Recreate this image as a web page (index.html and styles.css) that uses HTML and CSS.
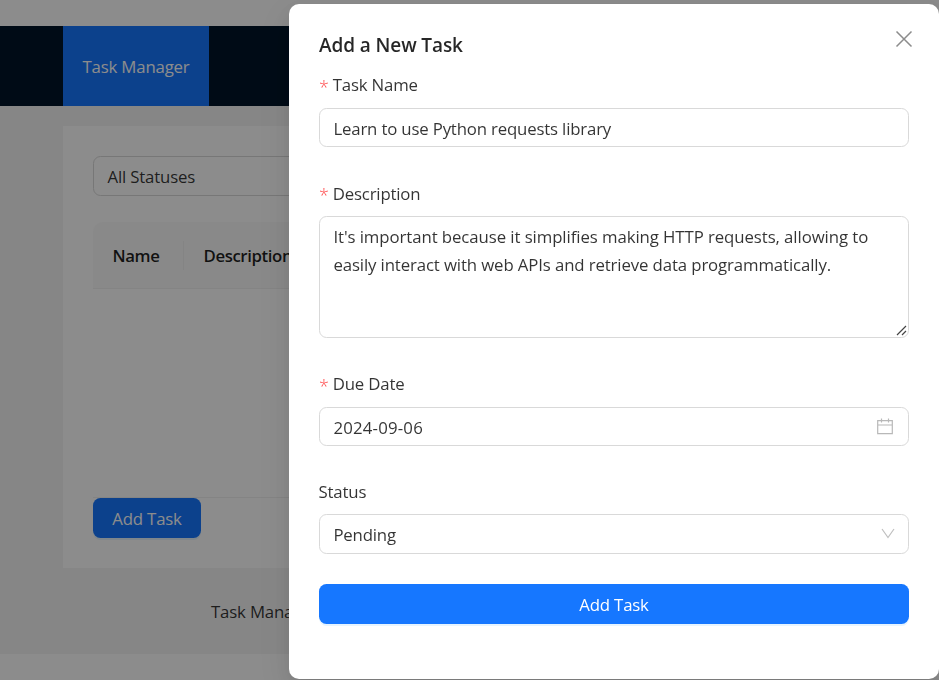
FILE: index.html
```html
<!DOCTYPE html>
<html lang="en">
<head>
<meta charset="utf-8">
<title>Task Manager</title>
<link rel="stylesheet" href="styles.css">
</head>
<body>
<div class="page">
  <header class="nav"><a class="nav-item">Task Manager</a></header>
  <main class="content">
    <section class="card">
      <div class="filter">All Statuses</div>
      <div class="table">
        <div class="table-head">
          <div class="th th-name">Name</div>
          <div class="th">Description</div>
        </div>
        <div class="table-body"></div>
      </div>
      <button class="btn btn-open">Add Task</button>
    </section>
  </main>
  <footer class="footer">Task Manager</footer>
</div>
<div class="mask">
  <div class="modal">
    <svg class="close" viewBox="0 0 18 18"><path d="M1.5 1.5l15 15M16.5 1.5l-15 15"/></svg>
    <h1 class="title">Add a New Task</h1>
    <form class="form">
      <label class="label"><span class="req">*</span><span>Task Name</span></label>
      <div class="control control-name"><span>Learn to use Python requests library</span></div>
      <label class="label label-low"><span class="req">*</span><span>Description</span></label>
      <div class="control area">
        <p class="line-one">It's important because it simplifies making HTTP requests, allowing to</p>
        <p class="line-two">easily interact with web APIs and retrieve data programmatically.</p>
        <svg class="grip" viewBox="0 0 11 11"><path d="M1 10L10 1M6 10L10 6"/></svg>
      </div>
      <label class="label"><span class="req">*</span><span>Due Date</span></label>
      <div class="control control-date">
        <span class="date">2024-09-06</span>
        <svg class="icon-date" viewBox="0 0 16 17"><path d="M.7 2.7h14.6v13H.7zM.7 7h14.6M4.5.5v4M11.5.5v4"/></svg>
      </div>
      <label class="label label-low"><span class="optional">Status</span></label>
      <div class="control control-status">
        <span>Pending</span>
        <svg class="icon-down" viewBox="0 0 14 11"><path d="M1 1l6 8.5L13 1"/></svg>
      </div>
      <button class="btn btn-submit" type="button">Add Task</button>
    </form>
  </div>
</div>
</body>
</html>
```
FILE: styles.css
```css
* { box-sizing: border-box; }
html, body { margin: 0; height: 100%; overflow: hidden; }
body {
  background: #fff;
  color: rgba(0, 0, 0, .8);
  font: 400 16.8px/28px "Open Sans", "Noto Sans", sans-serif;
  letter-spacing: -.17px;
}
.page { padding-top: 26px; }
.nav { display: flex; height: 80px; padding-left: 63px; background: #001529; }
.nav-item { width: 146px; background: #1677ff; color: #fff; text-align: center; line-height: 81px; }
.content { padding: 20px 63px 0; background: #f5f5f5; }
.card { height: 442px; padding: 30px; background: #fff; }
.filter { height: 40px; padding: 0 13.5px; border: 1px solid #d9d9d9; border-radius: 7.5px; line-height: 40px; }
.table { margin-top: 26px; }
.table-head {
  display: flex;
  align-items: center;
  height: 67px;
  background: #fafafa;
  border-bottom: 1px solid #f0f0f0;
  border-radius: 10px 10px 0 0;
  color: rgba(0, 0, 0, .88);
  font-weight: 600;
  letter-spacing: -.4px;
}
.th { padding: 1px 0 0 19.5px; }
.th-name { width: 91px; border-right: 1px solid #f0f0f0; }
.table-body { height: 209px; border-bottom: 1px solid #f0f0f0; }
.btn {
  display: block;
  height: 40px;
  padding: 1px 0 0;
  border: 0;
  border-radius: 7.5px;
  background: #1677ff;
  box-shadow: 0 2px 0 rgba(5, 145, 255, .1);
  color: #fff;
  font: inherit;
  letter-spacing: inherit;
}
.btn-open { width: 108px; }
.footer { height: 86px; padding: 30px 0 0 211px; background: #f5f5f5; }
.mask { position: fixed; inset: 0; padding: 4px 0 1px 289px; background: rgba(0, 0, 0, .45); }
.modal {
  position: relative;
  height: 675px;
  padding: 26px 30px;
  border-radius: 10px;
  background: #fff;
  box-shadow: 0 7px 20px rgba(0, 0, 0, .08), 0 4px 7px -5px rgba(0, 0, 0, .12), 0 11px 35px 10px rgba(0, 0, 0, .05);
}
svg { fill: none; stroke: #bfbfbf; stroke-width: 1.2; }
.close { position: absolute; top: 26px; right: 26px; width: 18px; height: 18px; stroke: #8c8c8c; stroke-width: 1.5; }
.title { margin: 0 0 4px; color: rgba(0, 0, 0, .85); font-size: 19px; font-weight: 600; line-height: 31px; letter-spacing: -.1px; }
.form { display: flex; flex-direction: column; }
.label { display: flex; gap: 3.7px; height: 28px; margin: 6px 0 9px; line-height: 28px; }
.label-low { line-height: 30px; }
.req { width: 10px; color: #ff4d4f; font-size: 18px; font-weight: 300; line-height: 33px; }
.optional { margin-left: -.5px; }
.control {
  display: flex;
  align-items: center;
  justify-content: space-between;
  height: 39px;
  padding: 2px 13px 0 13.4px;
  border: 1px solid #d9d9d9;
  border-radius: 7.5px;
}
.control-name { margin-bottom: 26px; }
.area { position: relative; display: block; height: 122px; padding-top: 6px; margin-bottom: 26px; }
.area p { margin: 0; white-space: nowrap; }
.line-one { letter-spacing: -.08px; }
.line-two { letter-spacing: -.12px; }
.grip { position: absolute; right: 1px; bottom: 1px; width: 11px; height: 11px; stroke: #444; }
.control-date { margin-bottom: 25px; }
.date { letter-spacing: .2px; }
.control-status { height: 40px; margin-bottom: 30px; }
.icon-date { width: 16px; height: 17px; margin: 0 2px 2px 0; stroke: #b8b8b8; }
.icon-down { width: 14px; height: 11px; margin-bottom: 3px; }
```
